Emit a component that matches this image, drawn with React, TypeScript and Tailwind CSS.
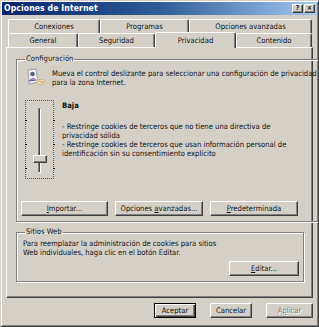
const raised =
  "border border-t-white border-l-white border-r-[#404040] border-b-[#404040] shadow-[inset_-1px_-1px_0_#808080]";

function Btn({ children, w, def = false, disabled = false }: { children: React.ReactNode; w: string; def?: boolean; disabled?: boolean }) {
  return (
    <div
      className={`${w} h-[15px] flex items-center justify-center bg-[#d4d0c8] ${
        def
          ? "border border-black shadow-[inset_1px_1px_0_#fff,inset_-1px_-1px_0_#404040,inset_-2px_-2px_0_#808080]"
          : raised
      } ${disabled ? "text-[#808080] [text-shadow:1px_1px_0_#fff]" : ""}`}
    >
      {children}
    </div>
  );
}

function Tab({ label, w, selected = false }: { label: string; w: string; selected?: boolean }) {
  return (
    <div
      className={`${w} flex items-center justify-center bg-[#d4d0c8] border-t border-l border-t-white border-l-white border-r border-r-[#404040] rounded-t-[2px] shadow-[inset_-1px_0_0_#808080] ${
        selected ? "h-[16px] -mb-[1px] -mt-[1px] relative z-10" : "h-[14px]"
      }`}
    >
      {label}
    </div>
  );
}

function PrivacyIcon() {
  return (
    <svg width="20" height="18" viewBox="0 0 20 18">
      <path d="M2 2 L10 1 L12 14 L3 16 Z" fill="#f2f2f4" stroke="#8a8a9a" strokeWidth="0.8" />
      <circle cx="6.5" cy="6" r="2.3" fill="#5a6080" />
      <path d="M3 13.5 C3.5 9.5 9.5 9 10.5 12.5 Z" fill="#4a5c98" />
      <path d="M4.5 12 L9 11.4" stroke="#c08ad8" strokeWidth="1.2" />
      <ellipse cx="15" cy="14" rx="4.2" ry="2.6" fill="#ecdcaa" stroke="#b8a46a" strokeWidth="0.6" />
      <circle cx="14" cy="13.5" r="0.6" fill="#8a6a3a" />
      <circle cx="16.5" cy="14.4" r="0.6" fill="#8a6a3a" />
    </svg>
  );
}

function Slider() {
  const ticks = [0, 1, 2, 3, 4, 5];
  return (
    <div className="w-[29px] h-[79px] border border-dotted border-[#505050] flex justify-center gap-[6px] pt-[7px] shrink-0">
      <div className="flex flex-col gap-[11px]">
        {ticks.map((t) => (
          <div key={t} className={`w-[2px] h-[1px] ${t % 2 === 0 ? "bg-[#909090]" : "bg-black"}`} />
        ))}
      </div>
      <div className="flex flex-col items-center w-[14px]">
        <div className="w-[3px] h-[47px] border-l border-t border-l-[#808080] border-t-[#808080] border-r border-r-white bg-[#404040]" />
        <div className={`w-[14px] h-[8px] bg-[#d4d0c8] ${raised}`} />
        <div className="w-[3px] h-[10px] border-l border-l-[#808080] border-r border-r-white border-b border-b-white bg-[#404040]" />
      </div>
      <div className="flex flex-col gap-[11px]">
        {ticks.map((t) => (
          <div key={t} className={`w-[2px] h-[1px] ${t % 2 === 0 ? "bg-[#909090]" : "bg-black"}`} />
        ))}
      </div>
    </div>
  );
}

const groupBox =
  "border border-[#808080] shadow-[1px_1px_0_#fff,inset_1px_1px_0_#fff]";

export default function App() {
  return (
    <div className="w-[319px] h-[327px] bg-[#d4d0c8] font-['DejaVu_Sans_Condensed','DejaVu_Sans',sans-serif] [font-stretch:condensed] text-[7.6px] leading-[9px] text-[#111] overflow-hidden border border-t-[#d4d0c8] border-l-[#d4d0c8] border-r-[#404040] border-b-[#404040] shadow-[inset_1px_1px_0_#fff,inset_-1px_-1px_0_#808080] p-[1px] flex flex-col">
      {/* Title bar */}
      <div className="h-[13px] bg-gradient-to-r from-[#0a246a] via-[#2f5c98] to-[#a6caf0] flex items-center justify-between pl-[2px] pr-[2px]">
        <span className="text-white font-bold text-[8.6px] tracking-[0.1px]">Opciones de Internet</span>
        <div className="flex gap-[1px]">
          <div className={`w-[11px] h-[9px] bg-[#d4d0c8] ${raised} flex items-center justify-center text-[7px] font-bold leading-none`}>?</div>
          <div className={`w-[11px] h-[9px] bg-[#d4d0c8] ${raised} flex items-center justify-center text-[7px] font-bold leading-none`}>×</div>
        </div>
      </div>

      {/* Tabs */}
      <div className="mt-[5px] ml-[6px] flex flex-col">
        <div className="flex h-[13px] items-end">
          <Tab label="Conexiones" w="w-[92px]" />
          <Tab label="Programas" w="w-[89px]" />
          <Tab label="Opciones avanzadas" w="w-[123px]" />
        </div>
        <div className="flex items-end">
          <Tab label="General" w="w-[70px]" />
          <Tab label="Seguridad" w="w-[77px]" />
          <Tab label="Privacidad" w="w-[81px]" selected />
          <Tab label="Contenido" w="w-[76px]" />
        </div>
      </div>

      {/* Panel */}
      <div className="ml-[4px] w-[307px] h-[251px] border border-t-white border-l-white border-r-[#404040] border-b-[#404040] shadow-[inset_-1px_-1px_0_#808080] pl-[9px] pr-[8px] pt-[7px] flex flex-col">
        <fieldset className={`${groupBox} h-[167px] px-[4px] flex flex-col`}>
          <legend className="ml-[4px] px-[1px] leading-[8px]">Configuración</legend>
          <div className="flex gap-[6px] mt-[5px] ml-[5px]">
            <PrivacyIcon />
            <div className="pt-[1px] whitespace-nowrap">
              Mueva el control deslizante para seleccionar una configuración de privacidad
              <br />
              para la zona Internet.
            </div>
          </div>
          <div className="flex gap-[8px] mt-[13px] ml-[4px]">
            <Slider />
            <div className="pt-[1px] whitespace-nowrap">
              <div className="font-bold">Baja</div>
              <div className="mt-[12px]">
                - Restringe cookies de terceros que no tiene una directiva de
                <br />
                privacidad sólida
                <br />
                - Restringe cookies de terceros que usan información personal de
                <br />
                identificación sin su consentimiento explícito
              </div>
            </div>
          </div>
          <div className="flex gap-[7px] mt-[22px]">
            <Btn w="w-[87px]"><span><u>I</u>mportar...</span></Btn>
            <Btn w="w-[88px]"><span>Opciones <u>a</u>vanzadas...</span></Btn>
            <Btn w="w-[88px]"><span><u>P</u>redeterminada</span></Btn>
          </div>
        </fieldset>

        <fieldset className={`${groupBox} h-[54px] mt-[6px] px-[4px] flex flex-col`}>
          <legend className="ml-[4px] px-[1px] leading-[8px]">Sitios Web</legend>
          <div className="mt-[3px] ml-[2px]">
            Para reemplazar la administración de cookies para sitios
            <br />
            Web individuales, haga clic en el botón Editar.
          </div>
          <div className="flex justify-end mt-[4px]">
            <Btn w="w-[70px]"><span><u>E</u>ditar...</span></Btn>
          </div>
        </fieldset>
      </div>

      {/* Bottom buttons */}
      <div className="flex justify-end gap-[14px] mt-[5px] pr-[4px]">
        <Btn w="w-[42px]" def>Aceptar</Btn>
        <Btn w="w-[42px]">Cancelar</Btn>
        <Btn w="w-[47px]" disabled><span>A<u>p</u>licar</span></Btn>
      </div>
    </div>
  );
}
